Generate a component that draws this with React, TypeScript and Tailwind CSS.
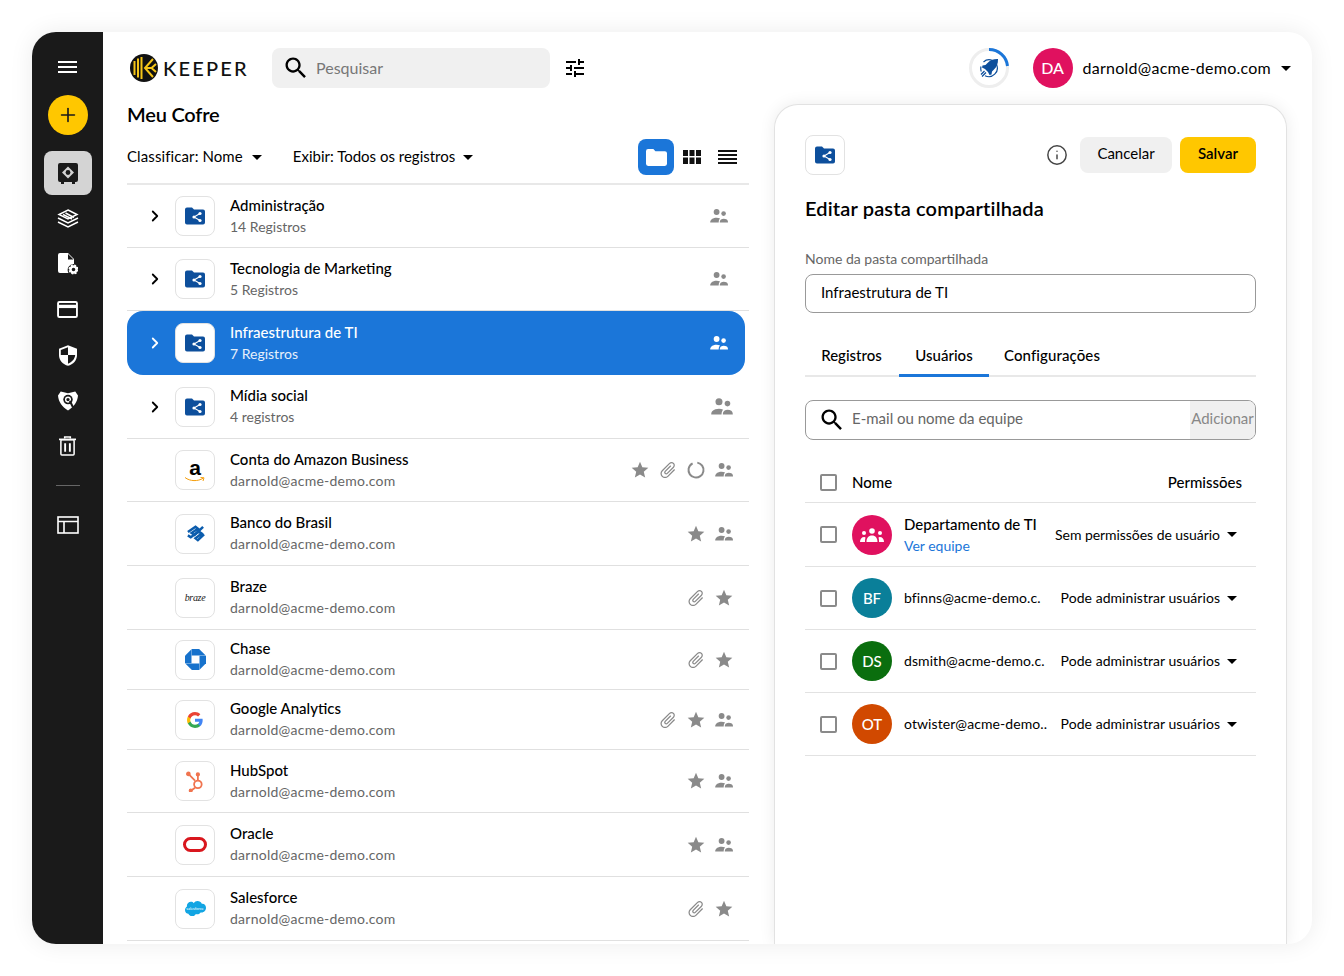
import { ChevronRight, Plus, Info } from "lucide-react";
import type { ReactNode } from "react";

const SearchIcon = () => (
  <svg viewBox="0 0 24 24" className="w-[28px] h-[28px] shrink-0" fill="#000">
    <path d="M15.5 14h-.79l-.28-.27C15.41 12.59 16 11.11 16 9.5 16 5.91 13.09 3 9.5 3S3 5.91 3 9.5 5.91 16 9.5 16c1.61 0 3.09-.59 4.23-1.57l.27.28v.79l5 4.99L20.49 19l-4.99-5zm-6 0C7.01 14 5 11.99 5 9.5S7.01 5 9.5 5 14 7.01 14 9.5 11.99 14 9.5 14z" />
  </svg>
);

const FolderShare = ({ className = "w-[20px] h-[20px]" }: { className?: string }) => (
  <svg viewBox="0 0 20 17" className={className}>
    <path fill="#0d4f9c" d="M2 0h5l2 2h9a2 2 0 0 1 2 2v11a2 2 0 0 1-2 2H2a2 2 0 0 1-2-2V2a2 2 0 0 1 2-2z" />
    <circle cx="15" cy="6" r="1.6" fill="#fff" />
    <circle cx="15" cy="13" r="1.6" fill="#fff" />
    <circle cx="9" cy="9.5" r="1.6" fill="#fff" />
    <path d="M15 6 9 9.5l6 3.5" fill="none" stroke="#fff" strokeWidth="1.1" />
  </svg>
);

const People = ({ color = "#8a8a8a", className = "w-[19px] h-[14px] shrink-0" }: { color?: string; className?: string }) => (
  <svg viewBox="0 0 19 14" className={className} fill={color}>
    <circle cx="6.6" cy="3" r="2.9" />
    <circle cx="13.6" cy="4.6" r="2.3" />
    <path d="M.2 13.6c0-1 .2-2 1-2.8C2.6 9.4 4.6 8.8 6.6 8.8c1.3 0 2.500.3 3.500.8-.9.8-1.400 2-1.400 4z" />
    <path d="M9.8 13.600c0-1.500.4-2.500 1.200-3.100.8-.6 1.700-.8 2.700-.8 1.100 0 2.200.3 3.100.9.800.6 1.200 1.600 1.200 3z" />
  </svg>
);

const Star = () => (
  <svg viewBox="0 0 24 24" className="w-[20px] h-[20px]" fill="#8a8a8a">
    <path d="M12 17.27 18.18 21l-1.64-7.03L22 9.24l-7.19-.61L12 2 9.19 8.63 2 9.24l5.46 4.73L5.82 21z" />
  </svg>
);

const Clip = () => (
  <svg viewBox="0 0 24 24" className="w-[20px] h-[20px] rotate-45" fill="#8a8a8a">
    <path d="M16.5 6v11.5c0 2.21-1.79 4-4 4s-4-1.79-4-4V5c0-1.38 1.12-2.5 2.5-2.5s2.5 1.12 2.5 2.5v10.5c0 .55-.45 1-1 1s-1-.45-1-1V6H10v9.500c0 1.380 1.120 2.500 2.500 2.500s2.500-1.120 2.500-2.500V5c0-2.210-1.790-4-4-4S7 2.790 7 5v12.500c0 3.040 2.460 5.500 5.500 5.500s5.500-2.460 5.500-5.500V6h-1.500z" />
  </svg>
);

const Ring = () => (
  <svg viewBox="0 0 20 20" className="w-[20px] h-[20px]" fill="none">
    <circle cx="10" cy="10" r="7.5" stroke="#8a8a8a" strokeWidth="2" strokeDasharray="42 5" transform="rotate(-80 10 10)" />
  </svg>
);

const Caret = () => (
  <span className="inline-block w-0 h-0 border-l-[5px] border-r-[5px] border-t-[5px] border-l-transparent border-r-transparent border-t-black" />
);

const Amazon = () => (
  <div className="flex flex-col items-center">
    <span className="text-[21px] font-bold leading-[18px] text-black font-['Liberation_Sans',sans-serif]">a</span>
    <svg viewBox="0 0 20 5" className="w-[20px] h-[5px]">
      <path d="M0 .5c5 4 13 4 18 .8M15.5 .5 19 .8 18 4" fill="none" stroke="#f59e0b" strokeWidth="1" />
    </svg>
  </div>
);

const BancoBrasil = () => (
  <svg viewBox="0 0 20 20" className="w-[19px] h-[19px]" fill="none" stroke="#0b5cad" strokeWidth="2.6">
    <path d="M2 8.500 10 3l2.500 2L6 9.500l3 2L18 3" />
    <path d="M2 12l3 2 8.500-6 3 2-6.500 5 2.500 2L19 11" />
  </svg>
);

const Braze = () => <span className="text-[10px] font-medium text-[#222] font-['Liberation_Serif',serif] italic tracking-[-0.3px]">braze</span>;

const Chase = () => (
  <svg viewBox="0 0 22 22" className="w-[21px] h-[21px]" fill="#1772cc">
    {[0, 90, 180, 270].map((a) => (
      <path key={a} d="M7 0h7.800l6.900 6.800H7z" transform={`rotate(${a} 11 11)`} />
    ))}
  </svg>
);

const Google = () => (
  <svg viewBox="0 0 24 24" className="w-[16px] h-[16px]">
    <path fill="#4285F4" d="M23.5 12.3c0-.8-.1-1.600-.2-2.300H12v4.500h6.500c-.3 1.500-1.100 2.700-2.400 3.600v3h3.900c2.200-2.100 3.500-5.100 3.500-8.800z" />
    <path fill="#34A853" d="M12 24c3.200 0 6-1.100 8-2.900l-3.900-3c-1.100.7-2.500 1.200-4.100 1.200-3.100 0-5.800-2.100-6.700-5H1.300v3.100C3.300 21.300 7.300 24 12 24z" />
    <path fill="#FBBC05" d="M5.300 14.300c-.5-1.500-.5-3.100 0-4.600V6.600h-4c-1.700 3.300-1.700 7.400 0 10.800z" />
    <path fill="#EA4335" d="M12 4.800c1.800 0 3.300.6 4.600 1.800l3.400-3.400C18 1.200 15.200 0 12 0 7.300 0 3.300 2.700 1.300 6.600l4 3.100c.9-2.800 3.600-4.900 6.700-4.900z" />
  </svg>
);

const HubSpot = () => (
  <svg viewBox="0 0 20 22" className="w-[19px] h-[21px]" fill="none" stroke="#f0744f" strokeWidth="1.9">
    <circle cx="12.5" cy="14" r="4" />
    <path d="M12.5 10V4M2.500 3l7 7M9.500 17.500l-4 3" />
    <circle cx="12.5" cy="3.500" r="1.300" fill="#f0744f" />
    <circle cx="2.500" cy="3" r="1.500" fill="#f0744f" />
    <circle cx="5" cy="20.500" r="1.200" fill="#f0744f" />
  </svg>
);

const Oracle = () => <span className="block w-[24px] h-[15px] rounded-full border-[3px] border-[#d9171e]" />;

const Salesforce = () => (
  <div className="relative flex items-center justify-center">
    <svg viewBox="0 0 24 17" className="w-[21px] h-[15px]" fill="#12a5e3">
      <path d="M10 2.500C11 1 12.500 0 14.200 0c2.300 0 4.200 1.300 5 3.100 3-.4 4.800 1.600 4.800 4.600 0 3-2.200 5.400-5 5.400-.4 0-.8 0-1.200-.1-.7 1.300-2.100 2.100-3.600 2.100-.7 0-1.300-.2-1.800-.4-.8 1.600-2.400 2.700-4.200 2.700-1.900 0-3.600-1.200-4.300-2.900C1.700 14.500 0 12.500 0 10.200c0-1.600.8-3 2.100-3.800C1.800 3 4.500 .7 7 .9c1.200 0 2.300.6 3 1.600z" />
    </svg>
    <span className="absolute text-[4px] leading-none text-white">salesforce</span>
  </div>
);

type Row = {
  title: string;
  sub: string;
  icon: ReactNode;
  right?: ReactNode[];
  chevron?: boolean;
  selected?: boolean;
  h: string;
};

const mail = "darnold@acme-demo.com";

const rows: Row[] = [
  { title: "Administração", sub: "14 Registros", icon: <FolderShare />, chevron: true, h: "h-[63px]", right: [<People key="p" />] },
  { title: "Tecnologia de Marketing", sub: "5 Registros", icon: <FolderShare />, chevron: true, h: "h-[63px]", right: [<People key="p" />] },
  { title: "Infraestrutura de TI", sub: "7 Registros", icon: <FolderShare />, chevron: true, selected: true, h: "h-[64px]", right: [<People key="p" color="#fff" />] },
  { title: "Mídia social", sub: "4 registros", icon: <FolderShare />, chevron: true, h: "h-[64px]", right: [<People key="p" className="w-[23px] h-[17px] shrink-0 translate-x-[3px]" />] },
  { title: "Conta do Amazon Business", sub: mail, icon: <Amazon />, h: "h-[63px]", right: [<Star key="s" />, <Clip key="c" />, <Ring key="r" />, <People key="p" />] },
  { title: "Banco do Brasil", sub: mail, icon: <BancoBrasil />, h: "h-[64px]", right: [<Star key="s" />, <People key="p" />] },
  { title: "Braze", sub: mail, icon: <Braze />, h: "h-[64px]", right: [<Clip key="c" />, <Star key="s" />] },
  { title: "Chase", sub: mail, icon: <Chase />, h: "h-[60px]", right: [<Clip key="c" />, <Star key="s" />] },
  { title: "Google Analytics", sub: mail, icon: <Google />, h: "h-[60px]", right: [<Clip key="c" />, <Star key="s" />, <People key="p" />] },
  { title: "HubSpot", sub: mail, icon: <HubSpot />, h: "h-[63px]", right: [<Star key="s" />, <People key="p" />] },
  { title: "Oracle", sub: mail, icon: <Oracle />, h: "h-[64px]", right: [<Star key="s" />, <People key="p" />] },
  { title: "Salesforce", sub: mail, icon: <Salesforce />, h: "h-[64px]", right: [<Clip key="c" />, <Star key="s" />] },
];

const users = [
  { name: "bfinns@acme-demo.c.", initials: "BF", color: "bg-[#0a7f99]" },
  { name: "dsmith@acme-demo.c.", initials: "DS", color: "bg-[#0a6e0e]" },
  { name: "otwister@acme-demo..", initials: "OT", color: "bg-[#d14900]" },
];

function Sidebar() {
  const item = "h-[45.5px] flex items-center justify-center shrink-0";
  return (
    <aside className="w-[71px] shrink-0 bg-[#1a1a1a] flex flex-col items-center pt-[23px]">
      <div className="w-[24px] h-[24px] flex items-center justify-center shrink-0">
        <svg viewBox="0 0 19 12" className="w-[19px] h-[12px]" fill="#fff">
          <path d="M0 0h19v2H0zM0 5h19v2H0zM0 10h19v2H0z" />
        </svg>
      </div>
      <div className="mt-[16px] w-[40px] h-[40px] rounded-full bg-[#ffc700] flex items-center justify-center shrink-0">
        <Plus className="w-[22px] h-[22px] text-[#1a1a1a]" strokeWidth={1.8} />
      </div>
      <div className="mt-[16px] mb-[1px] w-[48px] h-[44px] rounded-lg bg-[#d4d4d4] flex items-center justify-center shrink-0">
        <svg viewBox="0 0 20 21" className="w-[20px] h-[21px]">
          <path fill="#1a1a1a" d="M2 0h16a2 2 0 0 1 2 2v15a2 2 0 0 1-2 2h-1v2h-3v-2H6v2H3v-2H2a2 2 0 0 1-2-2V2a2 2 0 0 1 2-2z" />
          <path fill="#d4d4d4" d="M10 3.500 16 9.500l-6 6-6-6z" />
          <circle cx="10" cy="9.500" r="2.400" fill="#1a1a1a" />
        </svg>
      </div>
      <div className={item}>
        <svg viewBox="0 0 22 20" className="w-[22px] h-[20px]" fill="none" stroke="#fff" strokeWidth="1.5">
          <path d="M11 1 20 5.500 11 10 2 5.500z" />
          <path d="M1 9l10 5 10-5M1 13l10 5 10-5" />
          <path d="M6 5.500l9 4.500M8.500 4l8.500 4.500" />
        </svg>
      </div>
      <div className={item}>
        <svg viewBox="0 0 20 22" className="w-[20px] h-[22px]">
          <path fill="#fff" d="M2 0h8l6 6v5a6 6 0 0 0-5.500 9H2a2 2 0 0 1-2-2V2a2 2 0 0 1 2-2z" />
          <path fill="#1a1a1a" d="M10 1v5.500h5.500" />
          <circle cx="15.500" cy="16.500" r="3" fill="none" stroke="#fff" strokeWidth="2.400" />
          <circle cx="15.500" cy="16.500" r="4.300" fill="none" stroke="#fff" strokeWidth="1.400" strokeDasharray="2 1.400" />
        </svg>
      </div>
      <div className={item}>
        <svg viewBox="0 0 22 18" className="w-[21px] h-[17px]">
          <rect x="1" y="1" width="20" height="16" rx="1.500" fill="none" stroke="#fff" strokeWidth="2" />
          <rect x="1" y="4" width="20" height="3.500" fill="#fff" />
        </svg>
      </div>
      <div className={item}>
        <svg viewBox="0 0 20 23" className="w-[18px] h-[21px]">
          <path fill="#fff" d="M10 0 20 4v7c0 6-4.300 10.500-10 12C4.300 21.500 0 17 0 11V4z" />
          <path fill="#1a1a1a" d="M10 2.200V11H2V5.400zM10 11h8c-.4 4.500-3.600 8-8 9.700z" />
        </svg>
      </div>
      <div className={item}>
        <svg viewBox="0 0 22 22" className="w-[20px] h-[21px]">
          <path fill="#fff" d="M3 1 11 3l8-2 3 4.500c-.5 7-4.500 12.500-11 16.500C4.500 18 .5 12.500 0 5.500z" />
          <circle cx="11" cy="10" r="5.200" fill="#1a1a1a" />
          <circle cx="11" cy="10" r="2.600" fill="none" stroke="#fff" strokeWidth="1.500" />
          <path d="M13 11.500l3.500 7" stroke="#1a1a1a" strokeWidth="2.200" />
        </svg>
      </div>
      <div className={item}>
        <svg viewBox="0 0 18 21" className="w-[17px] h-[20px]" fill="none" stroke="#fff" strokeWidth="1.6">
          <path d="M0 3.500h18" strokeWidth="1.8" />
          <path d="M6 2.500V1h6v1.500" />
          <rect x="2" y="4" width="14" height="16" rx="1" />
          <path d="M6.500 7.500v9M11.500 7.500v9" strokeWidth="2" />
        </svg>
      </div>
      <div className="mt-[16px] w-[24px] h-px bg-[#666] shrink-0" />
      <div className="mt-[30px] shrink-0">
        <svg viewBox="0 0 22 18" className="w-[22px] h-[18px] block" fill="none" stroke="#fff" strokeWidth="1.6">
          <rect x="1" y="1" width="20" height="16" />
          <path d="M1 5.500h20M7 5.500V17" />
        </svg>
      </div>
    </aside>
  );
}

function Header() {
  return (
    <header className="h-[72px] shrink-0 flex items-center pl-[27px] pr-[21px]">
      <svg viewBox="0 0 28 28" className="w-[28px] h-[28px] shrink-0">
        <circle cx="14" cy="14" r="14" fill="#111" />
        <path d="M4.500 7v14M8 4.500v19M11.500 3v22" stroke="#f5c518" strokeWidth="2" />
        <path d="M23 5l-8 9 8 9M26 10l-4.500 4 4.500 4M15 14h6" stroke="#f5c518" strokeWidth="2" fill="none" />
      </svg>
      <span className="ml-[5px] w-[102px] text-[20px] font-medium tracking-[2.2px] text-[#111] leading-none">KEEPER</span>
      <div className="ml-[7px] w-[278px] h-[40px] rounded-lg bg-[#f0f0f0] flex items-center pl-[10px]">
        <SearchIcon />
        <span className="ml-[6px] text-[16px] text-[#777]">Pesquisar</span>
      </div>
      <svg viewBox="0 0 24 24" className="ml-[13px] w-[24px] h-[24px] shrink-0" fill="#000">
        <path d="M3 17v2h6v-2H3zM3 5v2h10V5H3zm10 16v-2h8v-2h-8v-2h-2v6h2zM7 9v2H3v2h4v2h2V9H7zm14 4v-2H11v2h10zm-6-4h2V7h4V5h-4V3h-2v6z" />
      </svg>
      <div className="ml-auto relative w-[42px] h-[42px] shrink-0 flex items-center justify-center">
        <svg viewBox="0 0 42 42" className="absolute inset-0 w-[42px] h-[42px]" fill="none">
          <circle cx="21" cy="21" r="18.500" stroke="#eeeeee" strokeWidth="3" />
          <path d="M21 2.500A18.500 18.500 0 0 1 39.500 19" stroke="#1b76d9" strokeWidth="3" />
        </svg>
        <svg viewBox="0 0 22 22" className="w-[22px] h-[22px]" fill="none">
          <path d="M5.500 5a8.500 8.500 0 0 1 9-1.500M18.500 7.500A8.500 8.500 0 0 1 7 18.700M3.300 14.500a8.500 8.500 0 0 1-.3-5" stroke="#0d4f9c" strokeWidth="1.200" />
          <path fill="#0d4f9c" d="M20 2c-4.500-.2-8 1.300-10.500 4L7.500 8 4.500 8.500 4 10.500l3 1.500 3 3 1.500 3 2-.5.500-3 2-2c2.700-2.500 4.200-6 4-10.500z" />
          <path d="M6.500 14l-3.500 3.500M8 15.500l-4 4" stroke="#0d4f9c" strokeWidth="1.300" />
        </svg>
      </div>
      <div className="ml-[23px] w-[40px] h-[40px] rounded-full bg-[#e0115f] text-white text-[16px] font-medium flex items-center justify-center shrink-0">DA</div>
      <span className="ml-[10px] text-[16px] tracking-[0.25px] text-black">{mail}</span>
      <span className="ml-[10px] flex"><Caret /></span>
    </header>
  );
}

function VaultRow({ r }: { r: Row }) {
  const sel = r.selected;
  return (
    <div className={`${r.h} flex items-center pl-[8px] shrink-0 ${sel ? "w-[618px] rounded-2xl bg-[#1b76d9] pr-[16px]" : `border-b border-[#e0e0e0] ${r.chevron ? "pr-[20px]" : "pr-[15px]"}`}`}>
      <div className="w-[40px] flex justify-center shrink-0">
        {r.chevron && <ChevronRight className={`w-[18px] h-[18px] ${sel ? "text-white" : "text-black"}`} strokeWidth={2.4} />}
      </div>
      <div className="w-[40px] h-[40px] rounded-lg border border-[#e2e2e2] bg-white flex items-center justify-center shrink-0">{r.icon}</div>
      <div className="ml-[15px] min-w-0 pb-[2px]">
        <div className={`text-[15px] leading-[20px] font-medium ${sel ? "text-white" : "text-black"}`}>{r.title}</div>
        <div className={`mt-[2px] text-[14px] leading-[19px] ${r.sub === mail ? "tracking-[0.25px]" : ""} ${sel ? "text-[#e6f0fb]" : "text-[#666]"}`}>{r.sub}</div>
      </div>
      <div className="ml-auto flex items-center gap-[8px]">
        {r.right?.map((n, i) => <span key={i} className="w-[20px] flex justify-center">{n}</span>)}
      </div>
    </div>
  );
}

function Vault() {
  return (
    <section className="w-[622px] ml-[24px] shrink-0 flex flex-col">
      <h1 className="text-[20px] leading-[20px] font-semibold tracking-[-0.2px] text-black">Meu Cofre</h1>
      <div className="mt-[15px] h-[36px] flex items-center">
        <span className="text-[15px] tracking-[0.1px] text-black pb-[2px]">Classificar: Nome</span>
        <span className="ml-[9px] flex"><Caret /></span>
        <span className="ml-[31px] text-[15px] text-black pb-[2px]">Exibir: Todos os registros</span>
        <span className="ml-[8px] flex"><Caret /></span>
        <div className="ml-auto flex items-center pr-[12px]">
          <div className="w-[36px] h-[36px] rounded-lg bg-[#1b76d9] flex items-center justify-center">
            <svg viewBox="0 0 20 16" className="w-[21px] h-[17px]" fill="#fff">
              <path d="M2 0h5l2 2h9a2 2 0 0 1 2 2v10a2 2 0 0 1-2 2H2a2 2 0 0 1-2-2V2a2 2 0 0 1 2-2z" />
            </svg>
          </div>
          <svg viewBox="0 0 18 14" className="ml-[9px] w-[18px] h-[14px]" fill="#111">
            <path d="M0 0h5v6H0zM6.500 0h5v6h-5zM13 0h5v6h-5zM0 7.500h5V14H0zM6.500 7.500h5V14h-5zM13 7.500h5V14h-5z" />
          </svg>
          <svg viewBox="0 0 19 14" className="ml-[17px] w-[19px] h-[14px]" fill="#111">
            <path d="M0 0h19v2H0zM0 4h19v2H0zM0 8h19v2H0zM0 12h19v2H0z" />
          </svg>
        </div>
      </div>
      <div className="mt-[8px] border-t-2 border-[#e8e8e8]" />
      <div className="flex flex-col">
        {rows.map((r) => <VaultRow key={r.title} r={r} />)}
      </div>
    </section>
  );
}

function Checkbox() {
  return <span className="block w-[17px] h-[17px] rounded-[2px] border-2 border-[#8a8a8a] shrink-0" />;
}

function EditPanel() {
  return (
    <section className="ml-[25px] w-[513px] shrink-0 rounded-t-[24px] border border-b-0 border-[#e2e2e2] bg-white shadow-[0_0_16px_rgba(0,0,0,0.08)] pl-[30px] pr-[30px] pt-[30px]">
      <div className="flex items-center h-[40px]">
        <div className="w-[40px] h-[40px] rounded-lg border border-[#e2e2e2] flex items-center justify-center"><FolderShare /></div>
        <Info className="ml-auto w-[22px] h-[22px] text-[#444]" strokeWidth={1.6} />
        <button className="ml-[12px] w-[92px] h-[36px] pb-[3px] rounded-lg bg-[#f0f0f0] text-[15px] text-black">Cancelar</button>
        <button className="ml-[8px] w-[76px] h-[36px] pb-[3px] rounded-lg bg-[#ffc700] text-[15px] font-semibold text-black">Salvar</button>
      </div>
      <h2 className="mt-[19px] text-[20px] leading-[28px] font-semibold tracking-[0.15px] text-black">Editar pasta compartilhada</h2>
      <label className="mt-[27px] block text-[14px] leading-[20px] text-[#666]">Nome da pasta compartilhada</label>
      <div className="mt-[5px] h-[39px] rounded-lg border border-[#999] flex items-center pl-[15px] pb-[3px] text-[15px] text-black">Infraestrutura de TI</div>
      <div className="mt-[24px] h-[40px] flex border-b-2 border-[#e8e8e8]">
        <div className="w-[93px] pb-[2px] flex items-center justify-center text-[15px] font-medium text-black">Registros</div>
        <div className="w-[90px] ml-[1px] flex items-center justify-center text-[15px] font-medium text-black border-b-[3px] border-[#1b76d9] -mb-[2px]">Usuários</div>
        <div className="pl-[15px] pb-[2px] flex items-center text-[15px] tracking-[0.1px] font-medium text-black">Configurações</div>
      </div>
      <div className="mt-[23px] h-[40px] rounded-lg border border-[#999] flex items-center pl-[12px] overflow-hidden">
        <SearchIcon />
        <span className="ml-[6px] pb-[3px] text-[15px] text-[#666]">E-mail ou nome da equipe</span>
        <div className="ml-auto w-[65px] h-full pb-[3px] bg-[#f0f0f0] flex items-center justify-center text-[15px] text-[#888]">Adicionar</div>
      </div>
      <div className="mt-[22px] h-[41px] pl-[15px] pr-[14px] flex items-center border-b border-[#e2e2e2]">
        <Checkbox />
        <span className="ml-[15px] text-[15px] font-medium text-black">Nome</span>
        <span className="ml-auto text-[15px] font-medium text-black">Permissões</span>
      </div>
      <div className="h-[64px] pl-[15px] pr-[19px] flex items-center border-b border-[#e2e2e2]">
        <Checkbox />
        <div className="ml-[15px] w-[40px] h-[40px] rounded-full bg-[#e0115f] flex items-center justify-center shrink-0">
          <svg viewBox="0 0 24 14" className="w-[24px] h-[14px]" fill="#fff">
            <circle cx="12" cy="3" r="2.8" /><circle cx="4" cy="5" r="2" /><circle cx="20" cy="5" r="2" />
            <path d="M6.500 14c0-4 2-6.500 5.500-6.500s5.500 2.500 5.500 6.500zM0 14c0-3 1.500-5 4.500-5l1 .5C5 11 5 12.500 5 14zM24 14c0-3-1.500-5-4.500-5l-1 .5c.5 1.500.5 3 .5 4.500z" />
          </svg>
        </div>
        <div className="ml-[12px] pb-[1px]">
          <div className="text-[15px] leading-[20px] font-medium text-black">Departamento de TI</div>
          <div className="mt-[2px] text-[14px] leading-[19px] text-[#1b76d9]">Ver equipe</div>
        </div>
        <span className="ml-auto text-[14px] tracking-[-0.05px] text-black pb-[1px]">Sem permissões de usuário</span>
        <span className="ml-[7px] flex"><Caret /></span>
      </div>
      {users.map((u) => (
        <div key={u.initials} className="h-[63px] pl-[15px] pr-[19px] flex items-center border-b border-[#e2e2e2]">
          <Checkbox />
          <div className={`ml-[15px] w-[40px] h-[40px] rounded-full ${u.color} text-white text-[15px] font-medium flex items-center justify-center shrink-0`}>{u.initials}</div>
          <span className="ml-[12px] text-[14px] tracking-[0.08px] text-black pb-[2px]">{u.name}</span>
          <span className="ml-auto text-[14px] tracking-[0.05px] text-black pb-[2px]">Pode administrar usuários</span>
          <span className="ml-[7px] flex"><Caret /></span>
        </div>
      ))}
    </section>
  );
}

export default function App() {
  return (
    <div className="h-[976px] bg-white p-[32px] overflow-hidden font-['Lato',sans-serif]">
      <div className="h-[912px] rounded-[24px] bg-white flex overflow-hidden shadow-[0_0_24px_rgba(0,0,0,0.08)]">
        <Sidebar />
        <main className="flex-1 min-w-0 flex flex-col">
          <Header />
          <div className="flex-1 min-h-0 flex">
            <Vault />
            <EditPanel />
          </div>
        </main>
      </div>
    </div>
  );
}
